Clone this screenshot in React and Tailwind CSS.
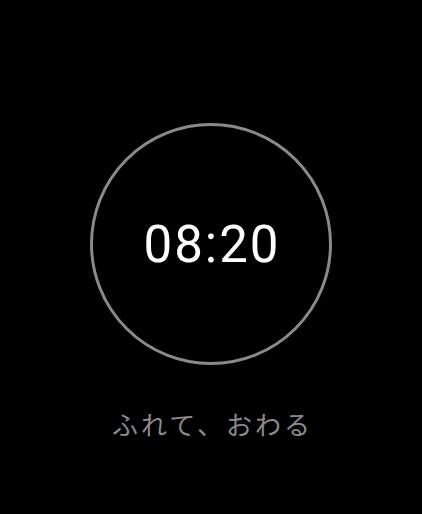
export default function App() {
  return (
    <div className="min-h-screen w-full bg-black flex flex-col items-center pt-[123px]">
      <div className="w-[242px] h-[242px] rounded-full border-[3px] border-[#8a8a8a] flex items-center justify-center">
        <span
          className="pl-[2px] text-white text-[51px] font-normal leading-none tracking-[2px]"
          style={{ fontFamily: 'Roboto, "Noto Sans", sans-serif' }}
        >
          08:20
        </span>
      </div>
      <p
        className="mt-[46px] pl-[3px] text-[#8a8a8a] text-[26px] leading-none tracking-[3px]"
        style={{ fontFamily: '"Noto Sans CJK JP", "Noto Sans", sans-serif' }}
      >
        ふれて、おわる
      </p>
    </div>
  );
}
